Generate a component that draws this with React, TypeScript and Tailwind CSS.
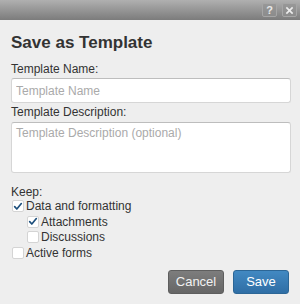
import React, { useState } from 'react';

const Check = () => (
  <svg viewBox="0 0 12 12" className="w-[11px] h-[11px]">
    <path d="M2 6.2 L4.6 9 L10 2.5" fill="none" stroke="#1d4f7c" strokeWidth="2" strokeLinecap="round" strokeLinejoin="round" />
  </svg>
);

const Box: React.FC<{ label: string; checked: boolean; onClick: () => void; indent?: boolean }> = ({ label, checked, onClick, indent }) => (
  <div onClick={onClick} className={`flex items-center h-[15.5px] cursor-pointer ${indent ? 'pl-[16px]' : 'pl-[1px]'}`}>
    <div className="w-[12px] h-[12px] bg-white border border-[#d4d4d4] rounded-[2px] flex items-center justify-center">
      {checked && <Check />}
    </div>
    <span className="ml-[2px] text-[12px] leading-[14px] text-[#333]">{label}</span>
  </div>
);

export default function App() {
  const [keep, setKeep] = useState({ data: true, attach: true, disc: false, forms: false });

  return (
    <div className="w-[300px] h-[304px] bg-[#eeeeee] flex flex-col font-['Liberation_Sans',Arial,sans-serif]">
      {/* Title bar */}
      <div className="h-[20px] bg-gradient-to-b from-[#b0b0b0] to-[#7c7c7c] flex items-center justify-end gap-[5px] pr-[3px]">
        <button className="w-[15px] h-[14px] border border-[#a6a6a6] bg-[#8f8f8f]/60 rounded-[2px] text-[#e8e8e8] text-[11px] leading-[12px] font-bold flex items-center justify-center">?</button>
        <button className="w-[15px] h-[14px] border border-[#a6a6a6] bg-[#8f8f8f]/60 rounded-[2px] flex items-center justify-center">
          <svg viewBox="0 0 10 10" className="w-[9px] h-[9px]">
            <path d="M1.5 1.5 L8.5 8.5 M8.5 1.5 L1.5 8.5" stroke="#ececec" strokeWidth="1.8" />
          </svg>
        </button>
      </div>

      <div className="flex-1 flex flex-col px-[11px]">
        <h1 className="mt-[13px] text-[17px] leading-[20px] font-bold text-[#333]">Save as Template</h1>

        <label className="mt-[9px] text-[12px] leading-[14px] text-[#333]">Template Name:</label>
        <input
          placeholder="Template Name"
          className="mt-[2px] h-[25px] w-[280px] bg-white border border-[#d6d6d6] border-t-[#bdbdbd] rounded-[3px] px-[4px] text-[12px] text-[#333] placeholder:text-[#aaaaaa] outline-none"
        />

        <label className="mt-[1.5px] text-[12px] leading-[14px] text-[#333]">Template Description:</label>
        <textarea
          placeholder="Template Description (optional)"
          className="mt-[3px] h-[51px] w-[280px] bg-white border border-[#d6d6d6] border-t-[#bdbdbd] rounded-[3px] px-[4px] py-[3px] text-[12px] leading-[14px] text-[#333] placeholder:text-[#aaaaaa] outline-none resize-none"
        />

        <div className="mt-[13px] text-[12px] leading-[13px] text-[#333]">Keep:</div>
        <Box label="Data and formatting" checked={keep.data} onClick={() => setKeep({ ...keep, data: !keep.data })} />
        <Box label="Attachments" indent checked={keep.attach} onClick={() => setKeep({ ...keep, attach: !keep.attach })} />
        <Box label="Discussions" indent checked={keep.disc} onClick={() => setKeep({ ...keep, disc: !keep.disc })} />
        <Box label="Active forms" checked={keep.forms} onClick={() => setKeep({ ...keep, forms: !keep.forms })} />

        <div className="flex-1" />

        <div className="flex justify-end gap-[9px] pb-[10px]">
          <button className="w-[56px] h-[24px] rounded-[3px] bg-gradient-to-b from-[#7d7d7d] to-[#666666] border border-[#5e5e5e] text-[13px] text-[#f2f2f2]">Cancel</button>
          <button className="w-[56px] h-[24px] rounded-[3px] bg-gradient-to-b from-[#4289c2] to-[#2f6ea5] border border-[#2c6696] text-[13px] text-white">Save</button>
        </div>
      </div>
    </div>
  );
}
